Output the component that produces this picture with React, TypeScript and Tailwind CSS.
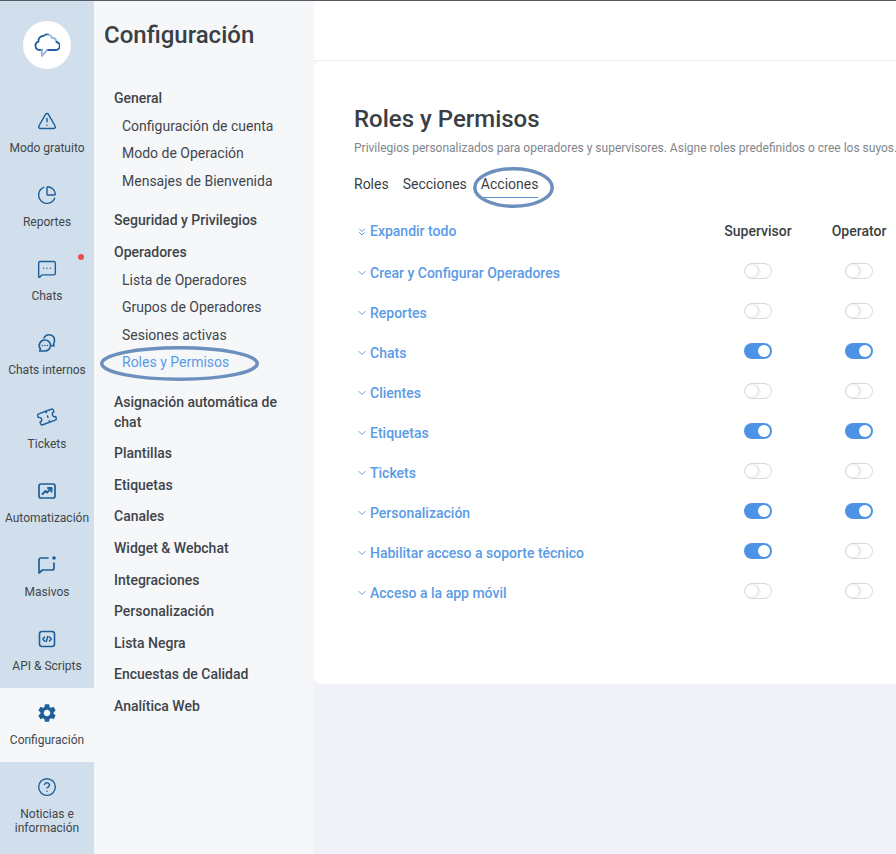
import { TriangleAlert, ChartPie, MessageSquareMore, Ticket, CircleHelp, ChevronDown, ChevronsDown } from "lucide-react";
import { MdSettings } from "react-icons/md";

function CloudLogo() {
  return (
    <svg width="26" height="26" viewBox="0 0 26 26" fill="none" strokeWidth="1.8" strokeLinecap="round" strokeLinejoin="round">
      <path d="M8 18H6a4.300 4.300 0 0 1-1.500-8.400A4.800 4.800 0 0 1 9.500 4a5 5 0 0 1 5-1.500" stroke="#1f5f99" />
      <path d="M14.500 2.500a5 5 0 0 1 3.500 3.500 4 4 0 0 1 4.500 4" stroke="#8fb0d8" />
      <path d="M22.500 10a4 4 0 0 1-1.500 8h-8" stroke="#1f5f99" />
      <path d="M13 18l-5 6-.5-6" stroke="#8fb0d8" />
    </svg>
  );
}

function InternalChatsIcon() {
  return (
    <svg width="20" height="20" viewBox="0 0 20 20" fill="none" stroke="#1f5f99" strokeWidth="1.6" strokeLinecap="round" strokeLinejoin="round">
      <path d="M8 7a5.500 5.500 0 0 1 5.500 5.500A5.500 5.500 0 0 1 8 18H2.500l1-2A5.500 5.500 0 0 1 8 7z" />
      <path d="M7 5a5.500 5.500 0 0 1 10.500 2.500c0 1.500-.5 2.500-1 3.500l.5 2-3-.5" />
      <path d="M5.500 12.500h.01M8 12.500h.01M10.500 12.500h.01" />
    </svg>
  );
}

function AutomationIcon() {
  return (
    <svg width="18" height="18" viewBox="0 0 18 18" fill="none" stroke="#1f5f99" strokeWidth="1.7" strokeLinecap="round" strokeLinejoin="round">
      <rect x="1" y="2" width="16" height="14" rx="2" />
      <path d="M4.500 12l3-3 1.500 1.500 4-4" strokeWidth="1.900" />
      <path d="M10 6h3.500v3.500" strokeWidth="1.900" />
    </svg>
  );
}

function MassiveIcon() {
  return (
    <svg width="20" height="20" viewBox="0 0 20 20" fill="none" stroke="#1f5f99" strokeWidth="1.7" strokeLinecap="round" strokeLinejoin="round">
      <path d="M11 3H4a2 2 0 0 0-2 2v13l3.500-3H15a2 2 0 0 0 2-2V8" />
      <circle cx="17" cy="3" r="1.800" fill="#1f5f99" stroke="none" />
    </svg>
  );
}

function ApiIcon() {
  return (
    <svg width="18" height="18" viewBox="0 0 18 18" fill="none" stroke="#1f5f99" strokeLinecap="round" strokeLinejoin="round">
      <rect x="1.500" y="1.500" width="15" height="15" rx="2.500" strokeWidth="1.600" />
      <path d="M6.500 7L4.800 9l1.700 2M11.500 7l1.700 2-1.700 2M9.800 6.500L8.200 11.500" strokeWidth="1.600" />
    </svg>
  );
}

const iconProps = { size: 20, color: "#1f5f99", strokeWidth: 1.7 };

const navItems = [
  { label: "Modo gratuito", icon: <TriangleAlert {...iconProps} /> },
  { label: "Reportes", icon: <ChartPie {...iconProps} /> },
  { label: "Chats", icon: <MessageSquareMore {...iconProps} />, dot: true },
  { label: "Chats internos", icon: <InternalChatsIcon /> },
  { label: "Tickets", icon: <Ticket {...iconProps} className="-rotate-[20deg]" /> },
  { label: "Automatización", icon: <AutomationIcon /> },
  { label: "Masivos", icon: <MassiveIcon /> },
  { label: "API & Scripts", icon: <ApiIcon /> },
  { label: "Configuración", icon: <MdSettings size={22} color="#1f5f99" />, active: true },
];

const permissions = [
  { name: "Crear y Configurar Operadores", sup: false, op: false },
  { name: "Reportes", sup: false, op: false },
  { name: "Chats", sup: true, op: true },
  { name: "Clientes", sup: false, op: false },
  { name: "Etiquetas", sup: true, op: true },
  { name: "Tickets", sup: false, op: false },
  { name: "Personalización", sup: true, op: true },
  { name: "Habilitar acceso a soporte técnico", sup: true, op: false },
  { name: "Acceso a la app móvil", sup: false, op: false },
];

function Toggle({ on }: { on: boolean }) {
  if (on) {
    return (
      <div className="flex h-4 w-7 items-center justify-end rounded-full bg-[#4c93e6] pr-[2px]">
        <div className="h-3 w-3 rounded-full bg-white" />
      </div>
    );
  }
  return (
    <div className="flex h-4 w-7 items-center rounded-full border border-[#d9d9d9] bg-white pl-[1px]">
      <div className="h-3 w-3 rounded-full bg-white shadow-[1px_0_3px_rgba(0,0,0,0.2)]" />
    </div>
  );
}

function Heading({ children, className = "" }: { children: React.ReactNode; className?: string }) {
  return <div className={`text-[14px] font-medium leading-5 text-[#3f444a] ${className}`}>{children}</div>;
}

function SubItem({ children, className = "text-[#41464c]" }: { children: React.ReactNode; className?: string }) {
  return <div className={`h-[27.5px] pl-2 text-[14px] leading-[27.5px] ${className}`}>{children}</div>;
}

export default function App() {
  return (
    <div className="flex h-[854px] w-[896px] overflow-hidden border-t border-[#555b60] bg-[#f0f2f7] font-['Roboto',sans-serif]">
      <aside className="flex w-[94px] shrink-0 flex-col bg-[#d0dfeb]">
        <div className="flex h-[95px] justify-center pt-5">
          <div className="flex h-12 w-12 items-center justify-center rounded-full bg-white">
            <CloudLogo />
          </div>
        </div>
        {navItems.map((item) => (
          <div
            key={item.label}
            className={`relative flex h-[74px] flex-col items-center pt-[14px] ${item.active ? "bg-[#f5f7f9]" : ""}`}
          >
            <div className="flex h-[22px] items-center justify-center">{item.icon}</div>
            {item.dot && <div className="absolute left-[78px] top-[10px] h-[6px] w-[6px] rounded-full bg-[#e2504f]" />}
            <div className="mt-[6px] whitespace-nowrap text-[12px] leading-5 text-[#41464c]">{item.label}</div>
          </div>
        ))}
        <div className="flex flex-col items-center pt-[14px]">
          <div className="flex h-[22px] items-center justify-center">
            <CircleHelp {...iconProps} />
          </div>
          <div className="mt-[9px] text-center text-[12px] leading-[14px] text-[#41464c]">
            Noticias e
            <br />
            información
          </div>
        </div>
      </aside>

      <nav className="relative w-[220px] shrink-0 bg-[#f5f7f9] pl-[10px]">
        <h2 className="h-[87px] pt-[18px] text-[24px] font-medium leading-8 text-[#3a3f45]">Configuración</h2>
        <div className="pl-[10px] pr-4">
          <Heading>General</Heading>
          <div className="pt-[4.500px]">
            <SubItem>Configuración de cuenta</SubItem>
            <SubItem>Modo de Operación</SubItem>
            <SubItem>Mensajes de Bienvenida</SubItem>
          </div>
          <Heading className="mt-[14.500px]">Seguridad y Privilegios</Heading>
          <Heading className="mt-3">Operadores</Heading>
          <div className="pt-[5px]">
            <SubItem>Lista de Operadores</SubItem>
            <SubItem>Grupos de Operadores</SubItem>
            <SubItem>Sesiones activas</SubItem>
            <SubItem className="text-[#5b9be6]">Roles y Permisos</SubItem>
          </div>
          <Heading className="mt-[15px]">Asignación automática de chat</Heading>
          <div className="mt-[11.700px] flex flex-col gap-[11.600px]">
            <Heading>Plantillas</Heading>
            <Heading>Etiquetas</Heading>
            <Heading>Canales</Heading>
            <Heading>Widget &amp; Webchat</Heading>
            <Heading>Integraciones</Heading>
            <Heading>Personalización</Heading>
            <Heading>Lista Negra</Heading>
            <Heading>Encuestas de Calidad</Heading>
            <Heading>Analítica Web</Heading>
          </div>
        </div>
        <svg className="absolute left-[6px] top-[345px]" width="159" height="35" fill="none">
          <ellipse cx="79.500" cy="17.500" rx="77.750" ry="15.750" stroke="#6d8fbe" strokeWidth="3.500" />
        </svg>
      </nav>

      <div className="flex min-w-0 flex-1 flex-col">
        <div className="h-[60px] shrink-0 border-b border-[#eceef1] bg-white" />
        <main className="relative h-[623px] shrink-0 rounded-bl-md rounded-tl-md bg-white pl-10 pt-[42px]">
          <h1 className="text-[24px] font-medium leading-8 text-[#3a3f45]">Roles y Permisos</h1>
          <p className="mt-[3px] whitespace-nowrap text-[12px] leading-5 text-[#80868c]">
            Privilegios personalizados para operadores y supervisores. Asigne roles predefinidos o cree los suyos.
          </p>
          <div className="mt-4 flex gap-[14px] text-[14px] leading-5 text-[#3a3f45]">
            <span>Roles</span>
            <span>Secciones</span>
            <span className="border-b border-[#5b8fc9] pb-[3px]">Acciones</span>
          </div>
          <div className="mt-3 flex h-[43px] items-center">
            <div className="flex w-[353px] shrink-0 items-center gap-[2px] pl-[2px] text-[14px] font-medium text-[#5b9be6]">
              <ChevronsDown size={12} strokeWidth={2} />
              Expandir todo
            </div>
            <div className="w-[102px] shrink-0 text-center text-[14px] font-medium text-[#3a3f45]">Supervisor</div>
            <div className="w-[100px] shrink-0 text-center text-[14px] font-medium text-[#3a3f45]">Operator</div>
          </div>
          {permissions.map((row) => (
            <div key={row.name} className="flex h-10 items-center">
              <div className="flex w-[353px] shrink-0 items-center gap-[2px] pl-[2px] text-[14px] font-medium text-[#5b9be6]">
                <ChevronDown size={12} strokeWidth={2} />
                {row.name}
              </div>
              <div className="flex w-[102px] shrink-0 justify-center pb-1">
                <Toggle on={row.sup} />
              </div>
              <div className="flex w-[100px] shrink-0 justify-center pb-1">
                <Toggle on={row.op} />
              </div>
            </div>
          ))}
          <svg className="absolute left-[159px] top-[106px]" width="81" height="41" fill="none">
            <ellipse cx="40.500" cy="20.500" rx="38.750" ry="18.750" stroke="#6d8fbe" strokeWidth="3.500" />
          </svg>
        </main>
      </div>
    </div>
  );
}
